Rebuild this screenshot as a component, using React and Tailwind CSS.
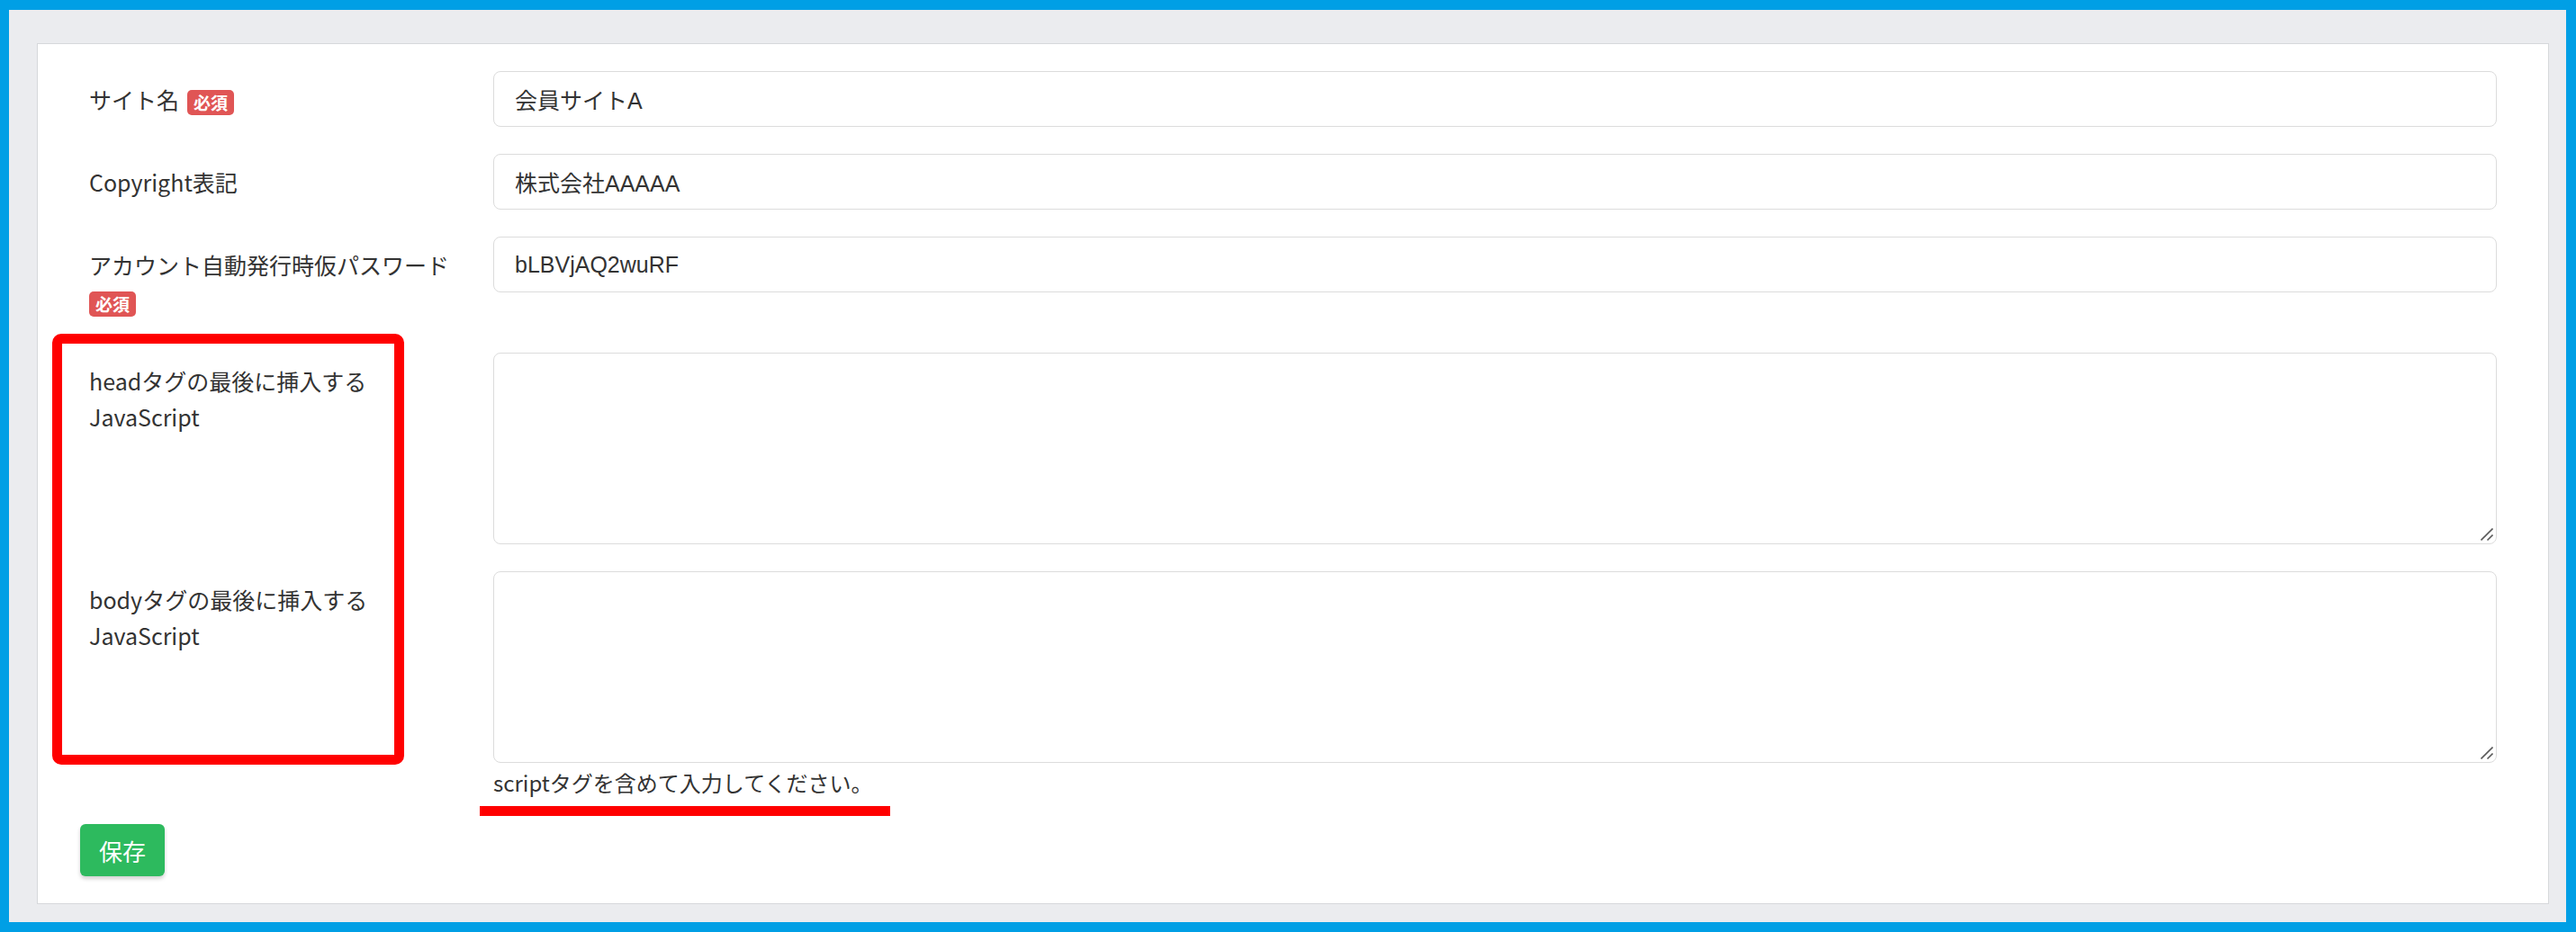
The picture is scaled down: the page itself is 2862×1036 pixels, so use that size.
import React from 'react';

const Required = ({ className = '' }) => (
  <span className={`inline-block align-middle bg-[#e05555] text-white text-[19px] font-bold leading-[28px] h-[28px] px-[7px] rounded-[5px] ${className}`}>
    必須
  </span>
);

const Grabber = () => (
  <svg className="absolute right-[4px] bottom-[4px] pointer-events-none" width="14" height="14" viewBox="0 0 14 14">
    <line x1="0.5" y1="13.5" x2="13.5" y2="0.5" stroke="#5a5a5a" strokeWidth="1.6" />
    <line x1="7.5" y1="13.5" x2="13.5" y2="7.5" stroke="#5a5a5a" strokeWidth="1.6" />
  </svg>
);

const Field = ({ label, children }) => (
  <div className="flex mb-[30px]">
    <div className="w-[449px] shrink-0 pr-[39px] pt-[11px] pb-[8px] leading-[40px] text-[25px] text-[#333]">
      {label}
    </div>
    <div className="flex-1 min-w-0">{children}</div>
  </div>
);

const TextInput = ({ value }) => (
  <input
    readOnly
    defaultValue={value}
    className="w-full h-[62px] border border-[#dcdcdc] rounded-[8px] px-[23px] text-[25px] text-[#333] bg-white outline-none font-['Liberation_Sans','Noto_Sans_CJK_JP',sans-serif]"
  />
);

const CodeArea = () => (
  <div className="relative">
    <textarea className="block w-full h-[213px] border border-[#dcdcdc] rounded-[8px] bg-white resize-none outline-none" />
    <Grabber />
  </div>
);

export default function App() {
  return (
    <div className="w-[2862px] h-[1036px] bg-[#009fe5] pt-[11px] pr-[11px] pb-[11px] pl-[10px] font-['Noto_Sans_CJK_JP',sans-serif]">
      <div className="h-full bg-[#ebecef] pt-[37px] pl-[31px] pr-[19px] pb-[20px]">
        <div className="relative h-full bg-white border border-[#d6d8db] pt-[30px] pl-[57px] pr-[57px]">
          <Field label={<>サイト名<Required className="ml-[9px]" /></>}>
            <TextInput value="会員サイトA" />
          </Field>
          <Field label="Copyright表記">
            <TextInput value="株式会社AAAAA" />
          </Field>
          <Field label={<>アカウント自動発行時仮パスワード <Required /></>}>
            <TextInput value="bLBVjAQ2wuRF" />
          </Field>
          <Field label={<>headタグの最後に挿入する<br />JavaScript</>}>
            <CodeArea />
          </Field>
          <div className="flex">
            <div className="w-[449px] shrink-0 pr-[39px] pt-[11px] leading-[40px] text-[25px] text-[#333]">
              bodyタグの最後に挿入する<br />JavaScript
            </div>
            <div className="flex-1 min-w-0">
              <CodeArea />
              <p className="mt-[2px] leading-[40px] text-[24px] text-[#333]">scriptタグを含めて入力してください。</p>
            </div>
          </div>
          <button className="mt-[26px] -ml-[10px] w-[94px] h-[58px] bg-[#2dba5e] text-white text-[26px] rounded-[6px] shadow-[0_3px_4px_rgba(0,0,0,0.18)]">
            保存
          </button>

          {/* annotation overlays */}
          <div className="absolute left-[16px] top-[322px] w-[391px] h-[479px] border-[11px] border-[#ff0000] rounded-[10px] pointer-events-none" />
          <div className="absolute left-[491px] top-[847px] w-[456px] h-[11px] bg-[#ff0000] pointer-events-none" />
        </div>
      </div>
    </div>
  );
}
